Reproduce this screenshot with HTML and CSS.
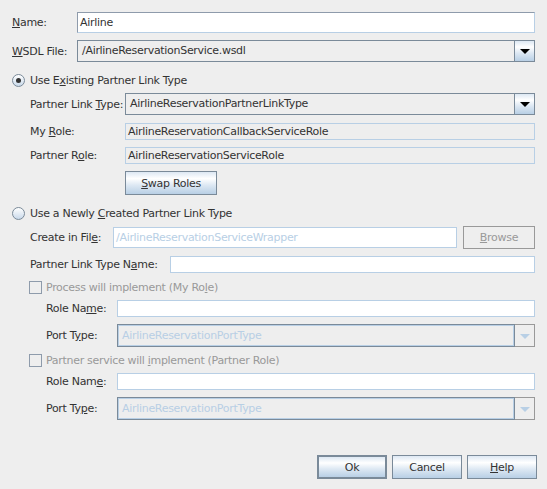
FILE: index.html
```html
<!doctype html>
<html lang="en">
<head>
    <meta charset="UTF-8">
    <title>Partner Link</title>
    <link rel="stylesheet" href="styles.css">
</head>
<body>
    <div class="dialog">
        <div class="row">
            <span class="lbl w-top"><u>N</u>ame:</span>
            <div class="field main">Airline</div>
        </div>
        <div class="row">
            <span class="lbl w-top"><u>W</u>SDL File:</span>
            <div class="combo">
                <div class="combo-text">/AirlineReservationService.wsdl</div>
                <div class="combo-btn"><span class="arrow"></span></div>
            </div>
        </div>

        <div class="row sect radio-row">
            <span class="radio on"></span>
            <span>Use E<u>x</u>isting Partner Link Type</span>
        </div>
        <div class="row tight lvl1">
            <span class="lbl w-sub">Partner Link <u>T</u>ype:</span>
            <div class="combo">
                <div class="combo-text">AirlineReservationPartnerLinkType</div>
                <div class="combo-btn"><span class="arrow"></span></div>
            </div>
        </div>
        <div class="row wide lvl1">
            <span class="lbl w-sub">My <u>R</u>ole:</span>
            <div class="field readonly">AirlineReservationCallbackServiceRole</div>
        </div>
        <div class="row lvl1">
            <span class="lbl w-sub">Partner R<u>o</u>le:</span>
            <div class="field readonly">AirlineReservationServiceRole</div>
        </div>
        <div class="row lvl1">
            <span class="lbl w-sub"></span>
            <button class="btn swap"><u>S</u>wap Roles</button>
        </div>

        <div class="row sect radio-row">
            <span class="radio"></span>
            <span>Use a Newly <u>C</u>reated Partner Link Type</span>
        </div>
        <div class="row tight lvl1">
            <span class="lbl w-file">Create in Fil<u>e</u>:</span>
            <div class="field disabled">/AirlineReservationServiceWrapper</div>
            <button class="btn browse" disabled><u>B</u>rowse</button>
        </div>
        <div class="row lvl1">
            <span class="lbl w-name">Partner Link Type N<u>a</u>me:</span>
            <div class="field"></div>
        </div>
        <div class="row lvl1 check-row">
            <span class="check"></span>
            <span class="off">Process will implement (My Ro<u>l</u>e)</span>
        </div>
        <div class="row tight lvl2">
            <span class="lbl w-role">Role Na<u>m</u>e:</span>
            <div class="field"></div>
        </div>
        <div class="row lvl2">
            <span class="lbl w-role">Port T<u>y</u>pe:</span>
            <div class="combo disabled">
                <div class="combo-text">AirlineReservationPortType</div>
                <div class="combo-btn"><span class="arrow"></span></div>
            </div>
        </div>
        <div class="row tight lvl1 check-row">
            <span class="check"></span>
            <span class="off">Partner service will <u>i</u>mplement (Partner Role)</span>
        </div>
        <div class="row tight lvl2">
            <span class="lbl w-role">Role Nam<u>e</u>:</span>
            <div class="field"></div>
        </div>
        <div class="row lvl2">
            <span class="lbl w-role">Port Ty<u>p</u>e:</span>
            <div class="combo disabled">
                <div class="combo-text">AirlineReservationPortType</div>
                <div class="combo-btn"><span class="arrow"></span></div>
            </div>
        </div>

        <div class="buttons">
            <button class="btn default">Ok</button>
            <button class="btn">Cancel</button>
            <button class="btn"><u>H</u>elp</button>
        </div>
    </div>
</body>
</html>
```

FILE: styles.css
```css
*{padding: 0;margin: 0;box-sizing: border-box}
body{
    width: 547px;
    height: 489px;
    overflow: hidden;
    background-color: #eeeeee;
    color: #333333;
    font-family: "DejaVu Sans", sans-serif;
    font-size: 11px;
    letter-spacing: -0.3px;
}
u{text-decoration: underline;text-underline-offset: 1px}
.dialog{
    display: flex;
    flex-direction: column;
    padding: 12px 12px 0 12px;
}
.row{
    display: flex;
    align-items: center;
    margin-top: 7px;
}
.row:first-child{margin-top: 0}
.row.tight{margin-top: 6px}
.row.wide{margin-top: 8px}
.row.sect{margin-top: 11px}
.lvl1{padding-left: 18px}
.lvl2{padding-left: 34px}
.lbl{
    flex-shrink: 0;
    white-space: nowrap;
}
.w-top{width: 65px}
.w-sub{width: 95px}
.w-file{width: 83px}
.w-name{width: 140px}
.w-role{width: 71px}

/* text fields */
.field{
    flex: 1;
    height: 17px;
    line-height: 15px;
    padding-left: 2px;
    border: 1px solid #b8cfe5;
    background-color: #ffffff;
    white-space: nowrap;
    overflow: hidden;
}
.field.main{
    height: 21px;
    line-height: 19px;
    border-color: #8e9bab #b8cfe5 #b8cfe5 #8e9bab;
}
.field.readonly{background-color: #eeeeee}
.field.disabled{
    height: 21px;
    line-height: 19px;
    color: #b8cfe5;
}

/* combo boxes */
.combo{
    flex: 1;
    display: flex;
    height: 22px;
    border: 1px solid #7a8a99;
}
.combo-text{
    flex: 1;
    padding-left: 4px;
    line-height: 20px;
    background-color: #eeeeee;
    white-space: nowrap;
    overflow: hidden;
}
.combo-btn{
    width: 20px;
    display: flex;
    align-items: center;
    justify-content: center;
    border-left: 1px solid #7a8a99;
    background: linear-gradient(#dde8f3 0%, #ffffff 30%, #dde8f3 60%, #b8cfe5 100%);
}
.arrow{
    width: 0;
    height: 0;
    border-left: 5px solid transparent;
    border-right: 5px solid transparent;
    border-top: 5px solid #000000;
    margin-top: 1px;
}
.combo.disabled{
    height: 23px;
    border: none;
}
.combo.disabled .combo-text{
    border: 1px solid #7a8a99;
    box-shadow: inset 0 0 0 1px #b8cfe5;
    line-height: 21px;
    color: #b8cfe5;
}
.combo.disabled .combo-btn{
    border: 1px solid #999999;
    border-left: none;
    background: #eeeeee;
}
.combo.disabled .arrow{border-top-color: #b8cfe5}

/* radios and checks */
.radio-row,
.check-row{height: 14px}
.radio-row span + span{margin-left: 5px}
.radio{
    width: 13px;
    height: 13px;
    border-radius: 50%;
    border: 1px solid #7a8a99;
    background: linear-gradient(#ffffff, #c9d9ea);
    display: flex;
    align-items: center;
    justify-content: center;
}
.radio.on::after{
    content: "";
    width: 5px;
    height: 5px;
    border-radius: 50%;
    background-color: #333333;
}
.check-row span + span{margin-left: 4px}
.check{
    width: 13px;
    height: 13px;
    margin-left: -1px;
    border: 1px solid #8e9bab;
    background-color: #eeeeee;
}
.off{color: #999999}

/* buttons */
.btn{
    height: 24px;
    font: inherit;
    letter-spacing: inherit;
    color: #333333;
    border: 1px solid #7a8a99;
    background: linear-gradient(#dde8f3 0%, #ffffff 30%, #dde8f3 60%, #b8cfe5 100%);
    text-align: center;
}
.btn.swap{width: 92px}
.btn.browse{
    width: 72px;
    height: 23px;
    margin-left: 6px;
    border-color: #999999;
    background: #eeeeee;
    color: #999999;
}
.btn.default{border: 2px solid #7a8a99}
.buttons{
    display: flex;
    justify-content: flex-end;
    gap: 5px;
    margin-top: 35px;
    margin-right: -2px;
}
.buttons .btn{width: 70px}
```
